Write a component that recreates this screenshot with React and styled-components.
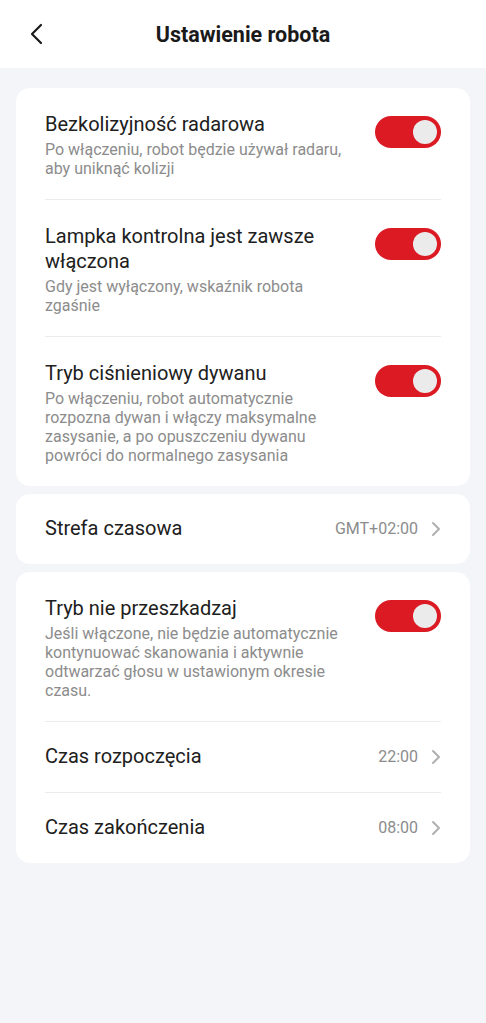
import React, { useState } from "react";
import styled, { createGlobalStyle } from "styled-components";

const GlobalStyle = createGlobalStyle`
  html, body {
    margin: 0;
    padding: 0;
    background: #f4f5f9;
    font-family: Roboto, "Noto Sans", sans-serif;
  }
`;

const Page = styled.div`
  min-height: 1023px;
  background: #f4f5f9;
`;

const Header = styled.header`
  height: 68px;
  background: #ffffff;
  display: flex;
  align-items: center;
  justify-content: center;
  position: relative;
`;

const BackButton = styled.button`
  position: absolute;
  left: 22px;
  top: 20px;
  width: 28px;
  height: 28px;
  padding: 0;
  border: none;
  background: none;
  display: flex;
  align-items: center;
  justify-content: center;
`;

const Title = styled.h1`
  margin: 0;
  font-size: 21.5px;
  font-weight: 700;
  color: #1a1a1a;
`;

const Content = styled.main`
  padding: 20px 16px;
  display: flex;
  flex-direction: column;
  gap: 8px;
`;

const Card = styled.section`
  background: #ffffff;
  border-radius: 14px;
  padding: 0 29px;
`;

const ToggleRow = styled.div`
  display: flex;
  align-items: flex-start;
  gap: 20px;
  padding: 24px 0 21px;
  border-top: ${(p) => (p.$first ? "none" : "1px solid #ececec")};
`;

const Texts = styled.div`
  flex: 1;
  min-width: 0;
`;

const Label = styled.div`
  font-size: 20px;
  line-height: 24.5px;
  color: #202020;
`;

const Description = styled.div`
  margin-top: 3.5px;
  font-size: 16px;
  line-height: 19px;
  color: #8c8c8c;
`;

const Switch = styled.button`
  flex: none;
  margin-top: 4px;
  width: 66px;
  height: 32px;
  border-radius: 16px;
  border: none;
  padding: 4px;
  background: ${(p) => (p.$on ? "#dc1a24" : "#cfcfd4")};
  display: flex;
  justify-content: ${(p) => (p.$on ? "flex-end" : "flex-start")};
  cursor: pointer;
`;

const Knob = styled.span`
  width: 24px;
  height: 24px;
  border-radius: 50%;
  background: #ebebeb;
`;

const LinkRow = styled.div`
  height: 70px;
  display: flex;
  align-items: center;
  border-top: ${(p) => (p.$first ? "none" : "1px solid #ececec")};
`;

const Value = styled.span`
  font-size: 16px;
  color: #8c8c8c;
  margin-right: 13px;
`;

const Chevron = () => (
  <svg width="10" height="16" viewBox="0 0 10 16">
    <path d="M2 2l6 6-6 6" fill="none" stroke="#b0b0b0" strokeWidth="2" strokeLinecap="round" strokeLinejoin="round" />
  </svg>
);

const Toggle = ({ label, desc, first }) => {
  const [on, setOn] = useState(true);
  return (
    <ToggleRow $first={first}>
      <Texts>
        <Label>{label}</Label>
        <Description>{desc}</Description>
      </Texts>
      <Switch $on={on} onClick={() => setOn(!on)}>
        <Knob />
      </Switch>
    </ToggleRow>
  );
};

const Link = ({ label, value, first }) => (
  <LinkRow $first={first}>
    <Texts>
      <Label>{label}</Label>
    </Texts>
    <Value>{value}</Value>
    <Chevron />
  </LinkRow>
);

export default function App() {
  return (
    <Page>
      <GlobalStyle />
      <Header>
        <BackButton aria-label="Wstecz">
          <svg width="14" height="22" viewBox="0 0 14 22">
            <path d="M12 2L3 11l9 9" fill="none" stroke="#1a1a1a" strokeWidth="2.2" strokeLinecap="round" strokeLinejoin="round" />
          </svg>
        </BackButton>
        <Title>Ustawienie robota</Title>
      </Header>
      <Content>
        <Card>
          <Toggle
            first
            label="Bezkolizyjność radarowa"
            desc="Po włączeniu, robot będzie używał radaru, aby uniknąć kolizji"
          />
          <Toggle
            label="Lampka kontrolna jest zawsze włączona"
            desc="Gdy jest wyłączony, wskaźnik robota zgaśnie"
          />
          <Toggle
            label="Tryb ciśnieniowy dywanu"
            desc="Po włączeniu, robot automatycznie rozpozna dywan i włączy maksymalne zasysanie, a po opuszczeniu dywanu powróci do normalnego zasysania"
          />
        </Card>
        <Card>
          <Link first label="Strefa czasowa" value="GMT+02:00" />
        </Card>
        <Card>
          <Toggle
            first
            label="Tryb nie przeszkadzaj"
            desc="Jeśli włączone, nie będzie automatycznie kontynuować skanowania i aktywnie odtwarzać głosu w ustawionym okresie czasu."
          />
          <Link label="Czas rozpoczęcia" value="22:00" />
          <Link label="Czas zakończenia" value="08:00" />
        </Card>
      </Content>
    </Page>
  );
}
